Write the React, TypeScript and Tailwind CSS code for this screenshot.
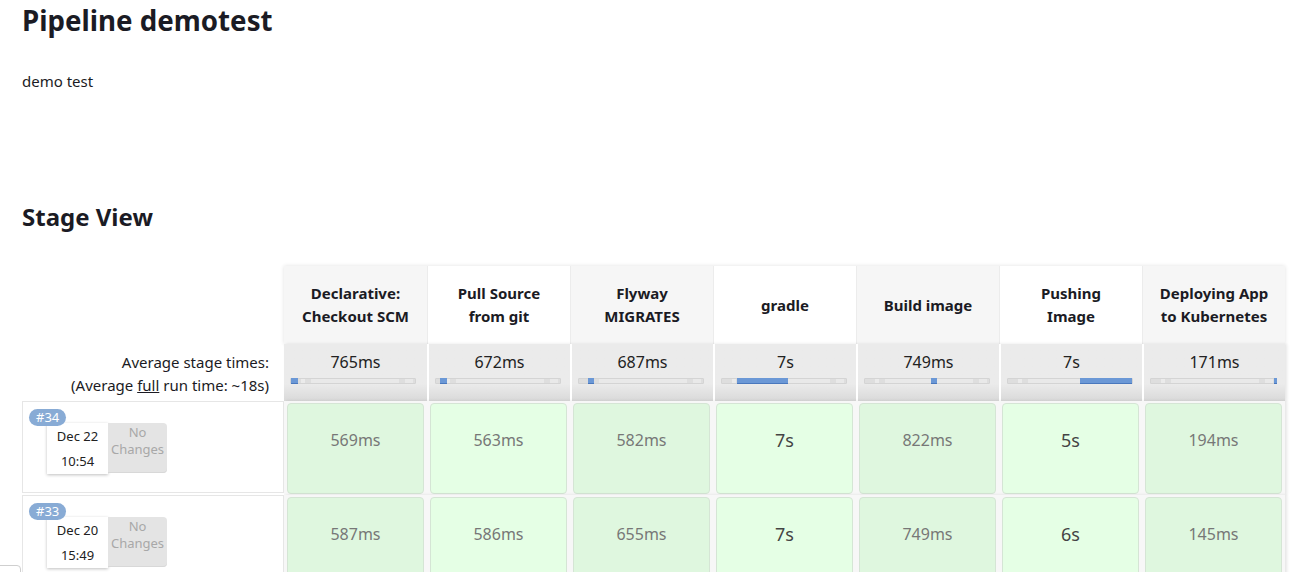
import React from "react";

const stages = [
  { name: ["Declarative:", "Checkout SCM"], avg: "765ms", bar: [0, 7], dark: true },
  { name: ["Pull Source", "from git"], avg: "672ms", bar: [4, 11], dark: false },
  { name: ["Flyway", "MIGRATES"], avg: "687ms", bar: [9, 15], dark: true },
  { name: ["gradle"], avg: "7s", bar: [15, 66], dark: false },
  { name: ["Build image"], avg: "749ms", bar: [66, 72], dark: true },
  { name: ["Pushing", "Image"], avg: "7s", bar: [72, 124], dark: false },
  { name: ["Deploying App", "to Kubernetes"], avg: "171ms", bar: [123, 126], dark: true },
];

const builds = [
  { id: "#34", date: "Dec 22", time: "10:54", times: ["569ms", "563ms", "582ms", "7s", "822ms", "5s", "194ms"] },
  { id: "#33", date: "Dec 20", time: "15:49", times: ["587ms", "586ms", "655ms", "7s", "749ms", "6s", "145ms"] },
];

const Bar = ({ from, to }: { from: number; to: number }) => (
  <div className="relative ml-[6px] h-[6px] w-[126px] rounded-[1px] bg-[#dedede] border border-[#d4d4d4]">
    <div className="absolute left-[10px] top-0 h-full w-[4px] bg-[#ebebeb]" />
    <div className="absolute left-[20px] top-0 h-full w-[88px] bg-[#e9e9e9]" />
    <div className="absolute left-[114px] top-0 h-full w-[8px] bg-[#e9e9e9]" />
    <div
      className="absolute top-[-1px] h-[6px] bg-[#6b98d6] border-b border-[#4a78bd]"
      style={{ left: from, width: Math.max(to - from, 2) }}
    />
  </div>
);

export default function App() {
  return (
    <div className="relative min-h-[572px] bg-white pl-[22px] font-['Noto_Sans',sans-serif] text-[#1b1b24]">
      <h1 className="pt-[1px] text-[27.7px] font-bold leading-[38px]">Pipeline demotest</h1>
      <p className="mt-[31px] text-[15px] leading-[22px]">demo test</p>

      <h2 className="mt-[109px] text-[24px] font-bold leading-[32px]">Stage View</h2>

      <div className="mt-[33px] flex flex-col">
        {/* header */}
        <div className="flex">
          <div className="w-[262px]" />
          <div className="flex shadow-[0_0_4px_rgba(0,0,0,0.12)]">
            {stages.map((s, i) => (
              <div
                key={i}
                className={`flex h-[78px] w-[143px] flex-col items-center justify-center text-center text-[15px] font-bold leading-[23px] ${
                  s.dark ? "bg-[#f6f6f6]" : "bg-white"
                } ${i > 0 ? "border-l border-[#ececec]" : ""}`}
              >
                {s.name.map((l) => (
                  <span key={l}>{l}</span>
                ))}
              </div>
            ))}
          </div>
        </div>

        {/* averages */}
        <div className="flex">
          <div className="flex w-[262px] flex-col items-end pr-[15px] pt-[7px] text-[15px] leading-[23px]">
            <span>Average stage times:</span>
            <span>
              (Average <span className="underline">full</span> run time: ~18s)
            </span>
          </div>
          <div className="flex shadow-[2px_0_3px_rgba(0,0,0,0.1)]">
            {stages.map((s, i) => (
              <div
                key={i}
                className={`flex h-[57px] w-[143px] flex-col bg-gradient-to-b from-[#ebebeb] from-70% to-[#d9d9d9] pt-[7px] ${
                  i > 0 ? "border-l-2 border-white" : ""
                }`}
              >
                <div className="text-center text-[16px] leading-[22px] text-[#222]">{s.avg}</div>
                <div className="mt-[5px]">
                  <Bar from={s.bar[0]} to={s.bar[1]} />
                </div>
              </div>
            ))}
          </div>
        </div>

        {/* builds */}
        {builds.map((b) => (
          <div key={b.id} className="flex">
            <div className="relative mb-[2px] h-[92px] w-[262px] border border-[#e6e6e6] bg-white">
              <span className="absolute left-[6px] top-[7px] z-10 rounded-full bg-[#88abd5] px-[7px] text-[13px] leading-[17px] text-white">
                {b.id}
              </span>
              <div className="ml-[24px] mt-[21px] flex">
                <div className="flex h-[51px] w-[61px] flex-col items-center justify-center gap-[8px] bg-white text-[13px] leading-[17px] text-[#222] shadow-[0_1px_3px_rgba(0,0,0,0.25)]">
                  <span>{b.date}</span>
                  <span>{b.time}</span>
                </div>
                <div className="flex h-[50px] w-[59px] flex-col items-center pt-[1px] rounded-r-[4px] bg-[#e4e4e4] text-[13px] leading-[17px] text-[#a8a8a8] shadow-[inset_0_-1px_0_#d8d8d8]">
                  <span>No</span>
                  <span>Changes</span>
                </div>
              </div>
            </div>
            <div className="flex shadow-[2px_0_3px_rgba(0,0,0,0.1)]">
              {b.times.map((t, i) => {
                const long = t.endsWith("s") && !t.endsWith("ms");
                return (
                  <div key={i} className="h-[94px] w-[143px] bg-[#f7f7f7] px-[3px] pt-[2px]">
                    <div
                      className={`flex h-[91px] items-center justify-center rounded-[4px] border border-[#d5e5d5] pb-[17px] ${
                        stages[i].dark ? "bg-[#dff7df]" : "bg-[#e5ffe5]"
                      } ${long ? "text-[18px] text-[#444]" : "text-[16px] text-[#777]"}`}
                    >
                      {t}
                    </div>
                  </div>
                );
              })}
            </div>
          </div>
        ))}
      </div>

      <div className="absolute left-[-10px] top-[565px] h-[20px] w-[31px] rounded-[4px] border border-[#cfcfcf] bg-white" />
    </div>
  );
}
